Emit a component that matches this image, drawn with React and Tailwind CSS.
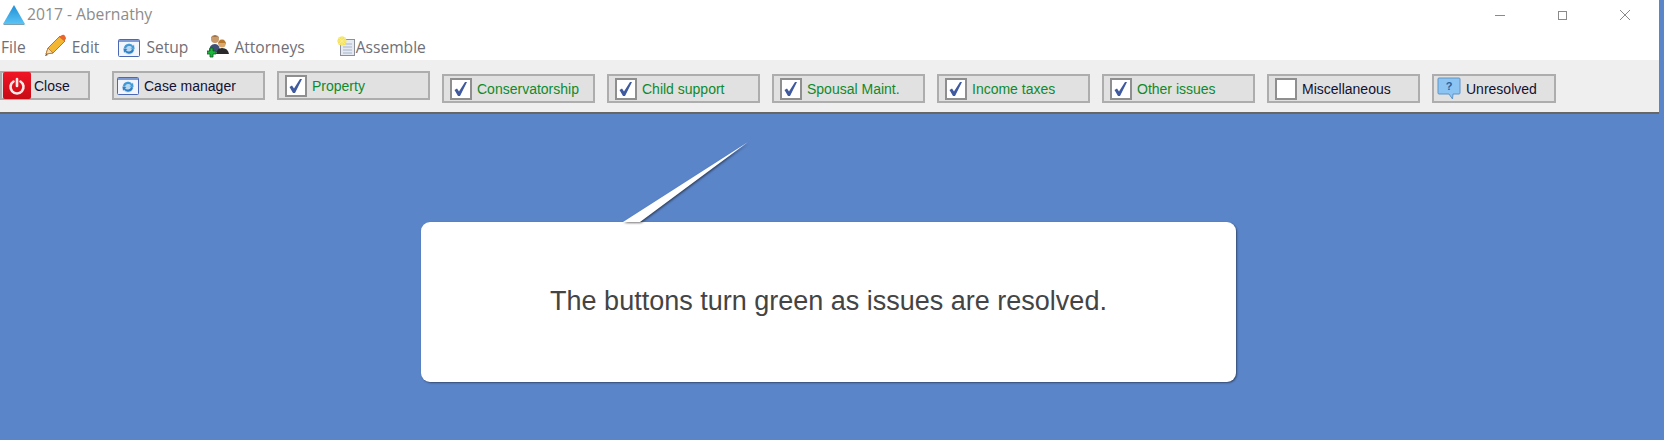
const sans = "font-['Liberation_Sans',Arial,sans-serif]";
const ui = "font-['Open_Sans','Noto_Sans',sans-serif]";

function Logo() {
  return (
    <svg width="24" height="22" viewBox="0 0 24 22" className="shrink-0">
      <defs>
        <linearGradient id="logoFill" x1="0" y1="0" x2="0" y2="1">
          <stop offset="0" stopColor="#1f8fd8" />
          <stop offset="1" stopColor="#5cc6f5" />
        </linearGradient>
      </defs>
      <path d="M12 1 L23 20 Q23 21 21 21 L3 21 Q1 21 1 20 Z" fill="url(#logoFill)" />
      <path d="M2 20.5 H22" stroke="#7f9fb0" strokeWidth="1" />
    </svg>
  );
}

function Pencil() {
  return (
    <svg width="24" height="24" viewBox="0 0 24 24" className="shrink-0">
      <path d="M3 20 L5 14 L17 2 L22 7 L10 19 Z" fill="#f2b632" stroke="#b8792a" strokeWidth="1" />
      <path d="M16 3 L19 1 Q21 0 22 2 L23 4 Q23 5 22 6 L21 7 Z" fill="#e8662e" />
      <path d="M3 20 L5 14 L10 19 Z" fill="#f4dcb0" stroke="#b8792a" strokeWidth="0.8" />
      <path d="M2 22 L3 20 L5 21 Z" fill="#5a3a20" />
    </svg>
  );
}

function WindowIcon() {
  return (
    <svg width="22" height="18" viewBox="0 0 22 18" className="shrink-0">
      <rect x="0.5" y="0.5" width="21" height="17" rx="1" fill="#f2f5fb" stroke="#4a68b4" strokeWidth="1" />
      <rect x="1" y="1" width="20" height="2" fill="#7f9bd6" />
      <circle cx="11" cy="10" r="5.5" fill="#bcd8f0" />
      <path d="M6 9 A5 5 0 0 1 15 7 L16 5.500 L16.500 10 L12.500 9.500 L14 8.300 A3.400 3.400 0 0 0 8 9.500 Z" fill="#3f9ad8" />
      <path d="M16 10.500 A5 5 0 0 1 7 12.500 L6 14 L5.500 9.500 L9.500 10 L8 11.200 A3.400 3.400 0 0 0 14 10 Z" fill="#2f7fc4" />
    </svg>
  );
}

function People() {
  return (
    <svg width="22" height="24" viewBox="0 0 22 24" className="shrink-0">
      <circle cx="8" cy="5" r="4" fill="#c99a6b" />
      <path d="M4 4 Q8 -1 12 4 L11 2.500 L5 2.500 Z" fill="#7a4a20" />
      <path d="M2 18 Q2 10 8 10 Q13 10 13 18 Z" fill="#3f4f78" />
      <circle cx="15" cy="10" r="3.600" fill="#d9a96f" />
      <path d="M11 11 Q11 5.500 15 5.500 Q19 5.500 19 11 L18 9 L12 9 Z" fill="#b5782c" />
      <path d="M9 20 Q10 14 15 14 Q21 14 22 20 Z" fill="#2a2a2a" />
      <path d="M3 14 H6 V17 H9 V20 H6 V23 H3 V20 H0 V17 H3 Z" fill="#19b83c" stroke="#0d5a1e" strokeWidth="0.8" />
    </svg>
  );
}

function Assemble() {
  return (
    <svg width="18" height="20" viewBox="0 0 18 20" className="shrink-0">
      <rect x="3.500" y="3.500" width="14" height="16" fill="#e4e9f2" stroke="#8a8f9a" />
      <path d="M6 8 H15 M6 11 H15 M6 14 H15 M6 17 H15" stroke="#a9b4c8" strokeWidth="1" />
      <circle cx="5" cy="5" r="4.500" fill="#f4e25a" />
      <path d="M5 0 V10 M0 5 H10 M1.500 1.500 L8.500 8.500 M8.500 1.500 L1.500 8.500" stroke="#f8ec8c" strokeWidth="1" />
    </svg>
  );
}

function Power() {
  return (
    <div className="flex h-[27px] w-[28px] shrink-0 items-center justify-center rounded-[2px] bg-gradient-to-b from-[#f01525] to-[#c80a14]">
      <svg width="18" height="18" viewBox="0 0 18 18" fill="none" stroke="#ffe9e9" strokeWidth="2.600" strokeLinecap="round">
        <path d="M5.500 4.500 A6.500 6.500 0 1 0 12.500 4.500" />
        <path d="M9 2 V9" />
      </svg>
    </div>
  );
}

function Bubble() {
  return (
    <svg width="24" height="24" viewBox="0 0 24 24" className="shrink-0">
      <path d="M2 1 H22 Q23 1 23 2 V16 Q23 17 22 17 H16 L15.500 22 L12 17 H2 Q1 17 1 16 V2 Q1 1 2 1 Z" fill="#8cc4f4" stroke="#5c94c8" strokeWidth="1" />
      <text x="12" y="13" textAnchor="middle" fontSize="11" fontWeight="bold" fill="#2d5f96" fontFamily="Liberation Sans">?</text>
    </svg>
  );
}

function Check({ on }) {
  return (
    <span className="flex h-[22px] w-[22px] shrink-0 items-center justify-center border-2 border-[#8f8f8f] bg-white">
      {on && (
        <svg width="16" height="16" viewBox="0 0 16 16">
          <path d="M1.500 9 L4 7.500 L6 10.500 L12 1 L14 1 L7 15 L5 15 Z" fill="#3f5a9e" />
        </svg>
      )}
    </span>
  );
}

function Btn({ w = "w-[153px]", gap = "gap-[5px]", pl = "pl-[6px]", green, raised, icon, children }) {
  return (
    <div
      className={`flex h-[29px] shrink-0 items-center border-2 border-[#adadad] bg-[#e1e1e1] ${w} ${gap} ${pl} ${raised ? "-mt-[3px]" : ""}`}
    >
      {icon}
      <span className={`pt-[2px] text-[14px] whitespace-nowrap ${sans} ${green ? "text-[#0f8a2c]" : "text-[#111133]"}`}>
        {children}
      </span>
    </div>
  );
}

const issues = [
  { label: "Conservatorship", on: true },
  { label: "Child support", on: true },
  { label: "Spousal Maint.", on: true },
  { label: "Income taxes", on: true },
  { label: "Other issues", on: true },
];

export default function App() {
  return (
    <div className="flex h-[440px] w-[1664px] overflow-hidden bg-[#5b85c9]">
      <div className="flex w-[1659px] shrink-0 flex-col">
        <div className="bg-white">
          <div className="flex h-[30px] items-center">
            <div className="ml-[2px] flex items-center gap-[1px]">
              <Logo />
              <span className={`text-[15.7px] text-[#8c8c8c] ${ui}`}>2017 - Abernathy</span>
            </div>
            <div className="ml-auto mr-[29px] flex items-center text-[#8a8a8a]">
              <span className="h-px w-[10px] bg-[#8a8a8a]" />
              <span className="ml-[53px] h-[9px] w-[9px] border border-[#8a8a8a]" />
              <svg width="10" height="10" viewBox="0 0 10 10" className="ml-[53px]" stroke="#8a8a8a" fill="none">
                <path d="M0 0 L10 10 M10 0 L0 10" />
              </svg>
            </div>
          </div>
          <div className={`flex h-[30px] items-center pt-[6px] text-[15.6px] text-[#6f6f78] ${ui}`}>
            <span className="ml-[1px]">File</span>
            <span className="ml-[17px] -mt-1"><Pencil /></span>
            <span className="ml-[5px]">Edit</span>
            <span className="ml-[19px]"><WindowIcon /></span>
            <span className="ml-[6px]">Setup</span>
            <span className="ml-[19px] -mt-1"><People /></span>
            <span className="ml-[5px]">Attorneys</span>
            <span className="ml-[32px] -mt-1"><Assemble /></span>
            <span className="ml-[1px]">Assemble</span>
          </div>
        </div>
        <div className="flex h-[54px] items-start gap-[12px] border-b-2 border-[#666666] bg-[#efefef] pt-[14px]">
          <Btn w="w-[90px]" pl="pl-[1px]" gap="gap-[3px]" raised icon={<Power />}>Close</Btn>
          <div className="ml-[10px]">
            <Btn w="w-[153px]" pl="pl-[3px]" gap="gap-[5px]" raised icon={<WindowIcon />}>Case manager</Btn>
          </div>
          <Btn raised icon={<Check on />} green>Property</Btn>
          {issues.map((b) => (
            <Btn key={b.label} icon={<Check on={b.on} />} green>{b.label}</Btn>
          ))}
          <Btn icon={<Check />}>Miscellaneous</Btn>
          <Btn w="w-[124px]" pl="pl-[3px]" gap="gap-[5px]" icon={<Bubble />}>Unresolved</Btn>
        </div>
        <div className="flex-1 pl-[421px] pt-[108px]">
          <div className={`relative flex h-[160px] w-[815px] items-center justify-center rounded-[9px] bg-white shadow-[1px_1px_2px_rgba(0,0,0,0.45)] ${sans}`}>
            {/* speech bubble pointer */}
            <svg width="130" height="82" viewBox="0 0 130 82" className="absolute left-[200px] top-[-80px] overflow-visible drop-shadow-[1px_1px_1px_rgba(0,0,0,0.55)]">
              <path d="M2 80 L127 0 L19 80 Z" fill="#ffffff" />
            </svg>
            <span className="relative -mt-[2px] text-[27px] text-[#444444]">The buttons turn green as issues are resolved.</span>
          </div>
        </div>
      </div>
    </div>
  );
}
